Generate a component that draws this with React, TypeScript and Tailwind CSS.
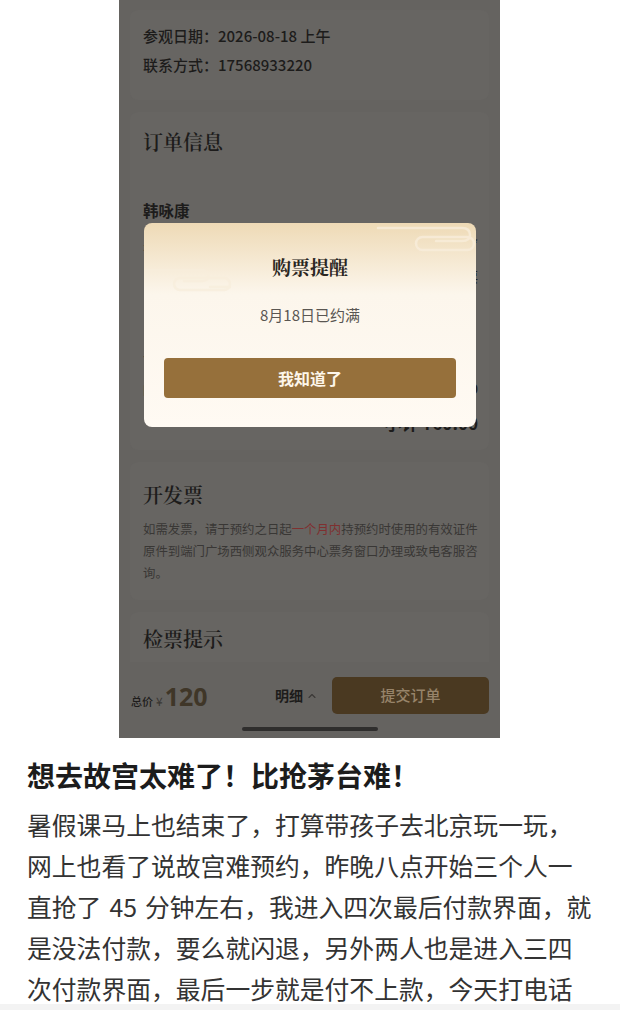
import React from "react";
import { ChevronUp } from "lucide-react";

const sans = "font-['Noto_Sans_CJK_SC','Noto_Sans',sans-serif]";
const serif = "font-['Noto_Serif_CJK_SC','Noto_Sans_CJK_SC',serif]";

const Clouds = () => (
  <svg className="absolute inset-0" width="332" height="204" viewBox="0 0 332 204" fill="none">
    <g stroke="#f8eedc" strokeWidth="2.5" strokeLinecap="round" opacity="0.75">
      <path d="M234 5 H318 Q326 5 326 12 Q326 18 318 18 H292" />
      <rect x="272" y="14" width="58" height="13" rx="6.5" />
      <path d="M2 47 H58 Q64 47 64 53 Q64 58 58 58 H40" />
      <rect x="30" y="55" width="56" height="12" rx="6" />
      <path d="M66 64 H86" />
    </g>
  </svg>
);

const PhoneShot = () => (
  <div className={`ml-[119px] w-[381px] h-[738px] relative overflow-hidden bg-[#656360] flex flex-col ${sans}`}>
    <div className="h-[662px] overflow-hidden px-[11px] pt-[10px] flex flex-col gap-[12px]">
      {/* visit info */}
      <div className="h-[90px] shrink-0 rounded-[8px] bg-[#676562] pt-[15px] px-[13px] text-[15px] leading-[22px] font-medium text-[#1d1c1b] flex flex-col gap-[7px]">
        <div>参观日期：2026-08-18 上午</div>
        <div>联系方式：17568933220</div>
      </div>

      {/* order info */}
      <div className="h-[338px] shrink-0 rounded-[8px] bg-[#676562] pt-[16px] pl-[13px] pr-[11px] text-[#1d1c1b]">
        <div className={`${serif} text-[20px] leading-[28px] font-semibold`}>订单信息</div>
        <div className="mt-[43px] text-[15.5px] leading-[22px] font-bold">韩咏康</div>
        <div className="mt-[11px] flex justify-between text-[14px] leading-[22px] font-medium">
          <span>身份证</span>
          <span>110************</span>
        </div>
        <div className="mt-[11px] flex justify-end text-[14px] leading-[22px] font-medium">
          <span>成人票</span>
        </div>
        <div className="mt-[52px] flex text-[14px] leading-[22px] font-medium">
          <span>入院时段</span>
        </div>
        <div className="mt-[16px] flex justify-between text-[14px] leading-[22px] font-medium">
          <span>门票</span>
          <span>¥60.00</span>
        </div>
        <div className="mt-[12px] flex justify-end text-[17px] leading-[24px] font-bold">
          <span>小计 ¥60.00</span>
        </div>
      </div>

      {/* invoice */}
      <div className="h-[138px] shrink-0 rounded-[8px] bg-[#676562] pt-[19px] pl-[13px] pr-[11px]">
        <div className={`${serif} text-[20px] leading-[28px] font-semibold text-[#1d1c1b]`}>开发票</div>
        <div className="mt-[9px] text-[12.4px] leading-[22px] text-[#393735] whitespace-nowrap">
          <div>
            如需发票，请于预约之日起<span className="text-[#7f3030]">一个月内</span>持预约时使用的有效证件
          </div>
          <div>原件到端门广场西侧观众服务中心票务窗口办理或致电客服咨</div>
          <div>询。</div>
        </div>
      </div>

      {/* check-in tips */}
      <div className="h-[80px] shrink-0 rounded-[8px] bg-[#676562] pt-[13px] pl-[13px]">
        <div className={`${serif} text-[20px] leading-[28px] font-semibold text-[#1d1c1b]`}>检票提示</div>
      </div>
    </div>

    {/* bottom bar */}
    <div className="h-[76px] bg-[#656360] pt-[15px] flex flex-col items-center">
      <div className="w-full h-[37px] flex items-center pl-[12px] pr-[11px]">
        <div className="w-[144px] flex items-baseline text-[#1d1c1b]">
          <span className="text-[11px] font-medium">总价</span>
          <span className="ml-[3px] text-[12px] text-[#3a3733]">¥</span>
          <span className="ml-[2px] text-[25px] leading-[30px] font-bold text-[#3f3628] font-['Noto_Sans',sans-serif]">120</span>
        </div>
        <div className="w-[57px] flex items-center text-[14px] font-bold text-[#1d1c1b]">
          明细
          <ChevronUp className="ml-[3px] text-[#3a3836]" size={12} strokeWidth={2.2} />
        </div>
        <div className="w-[157px] h-[37px] rounded-[5px] bg-[#4a3921] flex items-center justify-center text-[15px] font-medium text-[#97846a]">
          提交订单
        </div>
      </div>
      <div className="mt-[13px] w-[136px] h-[4px] rounded-full bg-[#2f2e2d]" />
    </div>

    {/* alert modal */}
    <div className="absolute left-[25px] top-[223px] w-[332px] h-[204px] rounded-[8px] overflow-hidden bg-linear-to-b from-[#eedab6] via-[#fcf6ec] via-35% to-[#fffaf3]">
      <Clouds />
      <div className="relative flex flex-col items-center pt-[30px] px-[20px]">
        <div className={`${serif} text-[19px] leading-[28px] font-bold text-[#2a2622]`}>购票提醒</div>
        <div className="mt-[23px] text-[15px] leading-[22px] text-[#5a5652]">8月18日已约满</div>
        <div className="mt-[32px] w-full h-[40px] rounded-[4px] bg-[#96703b] flex items-center justify-center text-[16px] font-bold text-[#fdf6ea]">
          我知道了
        </div>
      </div>
    </div>
  </div>
);

const App = () => (
  <div className={`w-[620px] h-[1010px] overflow-hidden bg-white ${sans}`}>
    <PhoneShot />
    <div className="px-[27px] pt-[19px]">
      <div className="text-[28px] leading-[36px] font-bold text-[#1c1c1c] whitespace-nowrap">
        想去故宫太难了！比抢茅台难！
      </div>
      <div className="mt-[11px] text-[24.8px] leading-[41px] text-[#333333] whitespace-nowrap">
        <div>暑假课马上也结束了，打算带孩子去北京玩一玩，</div>
        <div>网上也看了说故宫难预约，昨晚八点开始三个人一</div>
        <div>
          直抢了<span className="mx-[8px]">45</span>分钟左右，我进入四次最后付款界面，就
        </div>
        <div>是没法付款，要么就闪退，另外两人也是进入三四</div>
        <div>次付款界面，最后一步就是付不上款，今天打电话</div>
      </div>
    </div>
    <div className="-mt-[5px] h-[6px] bg-[#f3f3f3] relative" />
  </div>
);

export default App;
